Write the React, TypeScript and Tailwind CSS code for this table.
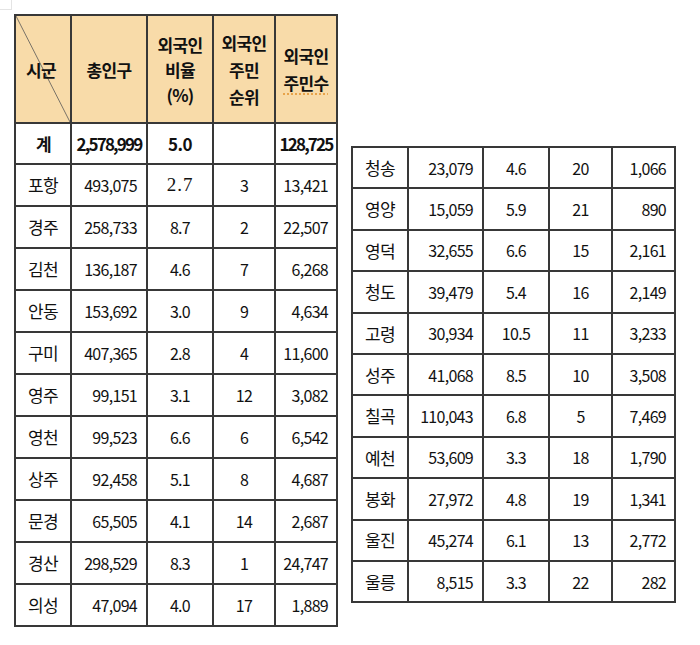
const left = [
  ["포항", "493,075", "2.7", "3", "13,421"],
  ["경주", "258,733", "8.7", "2", "22,507"],
  ["김천", "136,187", "4.6", "7", "6,268"],
  ["안동", "153,692", "3.0", "9", "4,634"],
  ["구미", "407,365", "2.8", "4", "11,600"],
  ["영주", "99,151", "3.1", "12", "3,082"],
  ["영천", "99,523", "6.6", "6", "6,542"],
  ["상주", "92,458", "5.1", "8", "4,687"],
  ["문경", "65,505", "4.1", "14", "2,687"],
  ["경산", "298,529", "8.3", "1", "24,747"],
  ["의성", "47,094", "4.0", "17", "1,889"],
];

const right = [
  ["청송", "23,079", "4.6", "20", "1,066"],
  ["영양", "15,059", "5.9", "21", "890"],
  ["영덕", "32,655", "6.6", "15", "2,161"],
  ["청도", "39,479", "5.4", "16", "2,149"],
  ["고령", "30,934", "10.5", "11", "3,233"],
  ["성주", "41,068", "8.5", "10", "3,508"],
  ["칠곡", "110,043", "6.8", "5", "7,469"],
  ["예천", "53,609", "3.3", "18", "1,790"],
  ["봉화", "27,972", "4.8", "19", "1,341"],
  ["울진", "45,274", "6.1", "13", "2,772"],
  ["울릉", "8,515", "3.3", "22", "282"],
];

const cell = "border-2 border-[#383838] align-middle p-0";

function Row({ r, h }: { r: string[]; h: string }) {
  return (
    <tr className={h}>
      <td className={`${cell} text-center text-[17px]`}>{r[0]}</td>
      <td className={`${cell} text-right pr-[9px]`}>{r[1]}</td>
      <td className={`${cell} text-center`}>
        {r[2] === "2.7" ? (
          <span className="font-['Liberation_Serif',serif] text-[19px] tracking-[1px]">2.7</span>
        ) : (
          r[2]
        )}
      </td>
      <td className={`${cell} text-center`}>{r[3]}</td>
      <td className={`${cell} text-right pr-[8px]`}>{r[4]}</td>
    </tr>
  );
}

export default function App() {
  return (
    <div className="relative min-h-[645px] w-[700px] bg-white font-['Noto_Sans_CJK_KR',sans-serif] text-[16px] tracking-[-0.7px] text-[#111]">
      <div className="absolute left-0 top-0 h-[10px] w-[12px] border-b border-r border-[#e4e4e4]" />
      <div className="flex items-start pl-[14px] pt-[14px]">
        <table className="w-[322px] table-fixed border-collapse">
          <colgroup>
            <col className="w-[56px]" />
            <col className="w-[76px]" />
            <col className="w-[66px]" />
            <col className="w-[62px]" />
            <col className="w-[62px]" />
          </colgroup>
          <thead>
            <tr className="h-[108px] bg-[#f8dba9] text-[17px] font-bold leading-[25px]">
              <th className={`${cell} relative`}>
                <svg className="absolute inset-0 h-full w-full" preserveAspectRatio="none" viewBox="0 0 56 108">
                  <line x1="0" y1="0" x2="56" y2="108" stroke="#555" strokeWidth="0.8" />
                </svg>
                <span className="relative pr-[4px]">시군</span>
              </th>
              <th className={cell}>총인구</th>
              <th className={cell}>
                외국인
                <br />
                비율
                <br />
                (%)
              </th>
              <th className={`${cell} leading-[27px]`}>
                외국인
                <br />
                주민
                <br />
                순위
              </th>
              <th className={`${cell} leading-[27px]`}>
                외국인
                <br />
                <span className="underline decoration-dotted decoration-[#e59a3a] underline-offset-[4px]">주민수</span>
              </th>
            </tr>
          </thead>
          <tbody>
            <tr className="h-[41px] text-[17px] font-bold tracking-[-1.8px]">
              <td className={`${cell} text-center`}>계</td>
              <td className={`${cell} text-center`}>2,578,999</td>
              <td className={`${cell} text-center tracking-[-0.5px]`}>5.0</td>
              <td className={cell}></td>
              <td className={`${cell} text-center`}>128,725</td>
            </tr>
            {left.map((r) => (
              <Row key={r[0]} r={r} h="h-[42px]" />
            ))}
          </tbody>
        </table>
        <table className="ml-[13px] mt-[132px] w-[323px] table-fixed border-collapse">
          <colgroup>
            <col className="w-[56px]" />
            <col className="w-[75px]" />
            <col className="w-[66px]" />
            <col className="w-[63px]" />
            <col className="w-[63px]" />
          </colgroup>
          <tbody>
            {right.map((r) => (
              <Row key={r[0]} r={r} h="h-[41.4px]" />
            ))}
          </tbody>
        </table>
      </div>
    </div>
  );
}
